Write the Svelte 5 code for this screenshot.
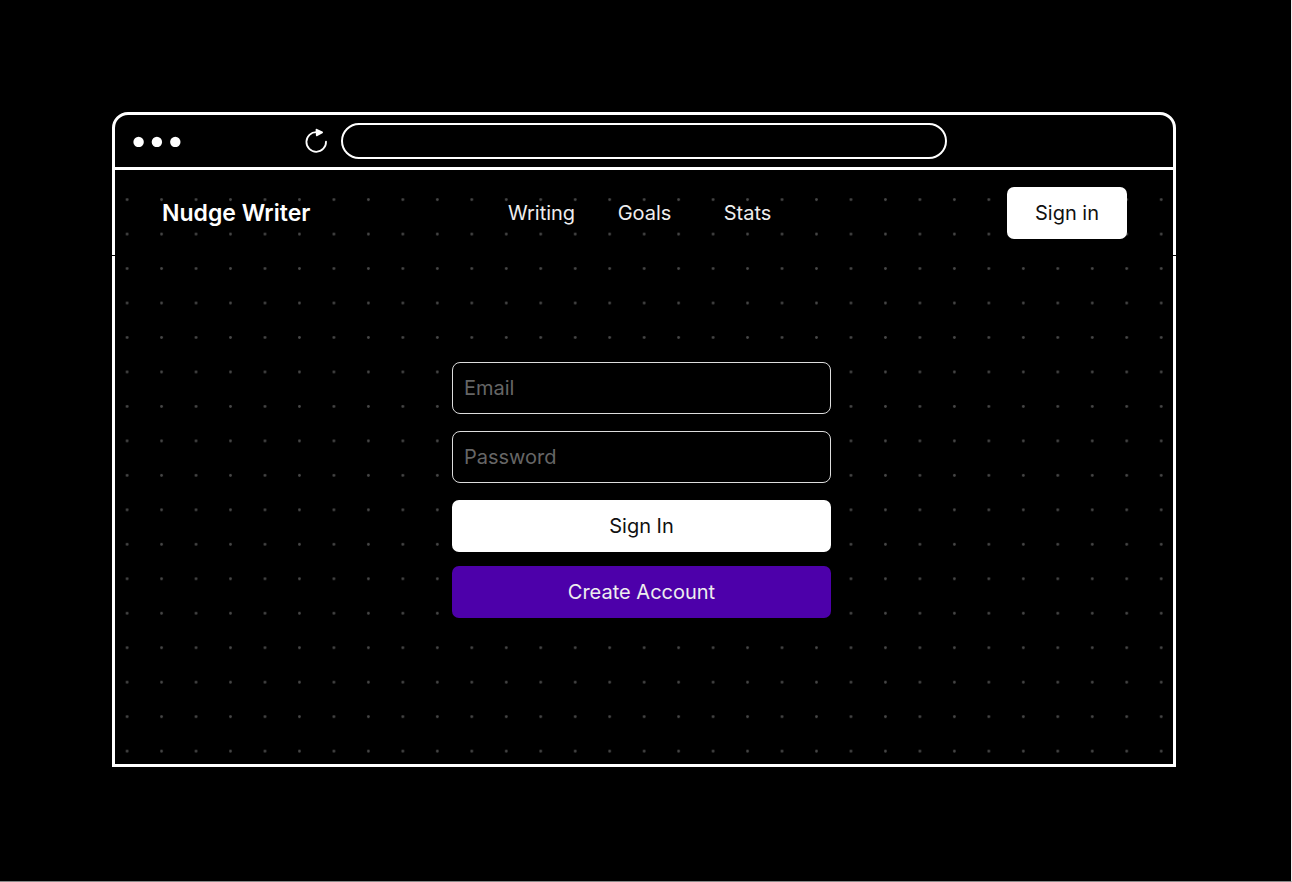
<script>
  const links = ['Writing', 'Goals', 'Stats'];
  let email = $state('');
  let password = $state('');
</script>

<div class="page">
  <div class="window">
    <div class="toolbar">
      <div class="controls">
        <svg class="lights" viewBox="0 0 48 12" aria-hidden="true">
          <circle cx="5.6" cy="7" r="5.2" />
          <circle cx="23.9" cy="7" r="5.2" />
          <circle cx="42.3" cy="7" r="5.2" />
        </svg>
        <button class="reload" type="button" aria-label="Reload">
          <svg viewBox="0 0 24 26" aria-hidden="true">
            <path d="M22 13.6A9.8 9.8 0 1 1 12.6 4.2" fill="none" stroke="#fff" stroke-width="1.8" stroke-linecap="round" />
            <path d="M12.6 1.8L18 4.4L12.9 7.2Z" fill="#fff" stroke="#fff" stroke-width="2" stroke-linejoin="round" />
          </svg>
        </button>
      </div>
      <input class="address" type="text" aria-label="Address" />
    </div>

    <div class="canvas">
      <svg class="dots" aria-hidden="true">
        <defs>
          <pattern id="grid" x="12.1" y="29.6" width="34.47" height="34.47" patternUnits="userSpaceOnUse" patternTransform="translate(-17.2 -17.2)">
            <circle cx="17.2" cy="17.2" r="1.4" fill="#484848" />
          </pattern>
        </defs>
        <rect width="100%" height="100%" fill="url(#grid)" />
      </svg>

      <header>
        <a class="brand" href="#home">Nudge Writer</a>
        <nav>
          {#each links as link}
            <a href={`#${link.toLowerCase()}`}>{link}</a>
          {/each}
        </nav>
        <button class="btn light signin" type="button">Sign in</button>
      </header>

      <main>
        <form onsubmit={(e) => e.preventDefault()}>
          <input type="email" placeholder="Email" aria-label="Email" bind:value={email} />
          <input type="password" placeholder="Password" aria-label="Password" bind:value={password} />
          <div class="actions">
            <button class="btn light" type="submit">Sign In</button>
            <button class="btn purple" type="button">Create Account</button>
          </div>
        </form>
      </main>
    </div>
  </div>
</div>

<style>
  :global(body) {
    background: #000;
  }

  .page,
  .page * {
    box-sizing: border-box;
  }

  .page {
    display: flex;
    min-height: 100vh;
    padding: 112px 115px 114px 112px;
    border-right: 1px solid #eee;
    border-bottom: 1px solid #888;
    background: #000;
    color: #fff;
    font-family: Inter, 'Liberation Sans', sans-serif;
    font-size: 20px;
    line-height: 28px;
  }

  .window {
    flex: 1;
    display: flex;
    flex-direction: column;
    min-width: 0;
    border: 3px solid #fff;
    border-radius: 16px 16px 0 0;
  }

  .toolbar {
    display: grid;
    grid-template-columns: 1fr minmax(0, 606px) 1fr;
    padding: 8px 0;
    border-bottom: 3px solid #fff;
  }

  .controls {
    display: flex;
    align-items: center;
    justify-content: space-between;
    padding: 0 13px 0 18px;
  }

  .lights {
    width: 48px;
    height: 12px;
    fill: #fff;
  }

  .reload {
    display: flex;
    padding: 0;
    border: 0;
    background: none;
  }

  .reload svg {
    width: 24px;
    height: 26px;
  }

  .address {
    width: 100%;
    height: 36px;
    padding: 0 16px;
    border: 2px solid #fff;
    border-radius: 18px;
    background: #000;
    color: #fff;
    font: inherit;
  }

  .canvas {
    position: relative;
    flex: 1;
    display: flex;
    flex-direction: column;
  }

  .dots {
    position: absolute;
    inset: 0;
    width: 100%;
    height: 100%;
  }

  header {
    position: relative;
    display: grid;
    grid-template-columns: 1fr auto 1fr;
    align-items: center;
    margin: 0 -3px;
    padding: 17px 49px 16px 50px;
    border-bottom: 1px solid #000;
  }

  a {
    color: inherit;
    text-decoration: none;
  }

  .brand {
    justify-self: start;
    font-size: 23px;
    font-weight: 600;
  }

  nav {
    display: grid;
    grid-template-columns: repeat(3, 103px);
    text-align: center;
    color: #eee;
  }

  .btn {
    height: 52px;
    padding: 0 28px;
    border: 0;
    border-radius: 7px;
    font: inherit;
  }

  .light {
    background: #fff;
    color: #111;
  }

  .purple {
    background: #4d00aa;
    color: #eee;
  }

  .signin {
    justify-self: end;
  }

  main {
    position: relative;
    display: flex;
    justify-content: center;
    padding: 106px 5px 48px 0;
  }

  form {
    display: grid;
    gap: 17px;
    width: 100%;
    max-width: 379px;
    background: #000;
  }

  form input {
    width: 100%;
    height: 52px;
    padding: 0 11px;
    border: 1px solid #ddd;
    border-radius: 8px;
    background: #000;
    color: #fff;
    font: inherit;
  }

  form input::placeholder {
    color: #666;
    opacity: 1;
  }

  .actions {
    display: grid;
    gap: 14px;
  }
</style>
